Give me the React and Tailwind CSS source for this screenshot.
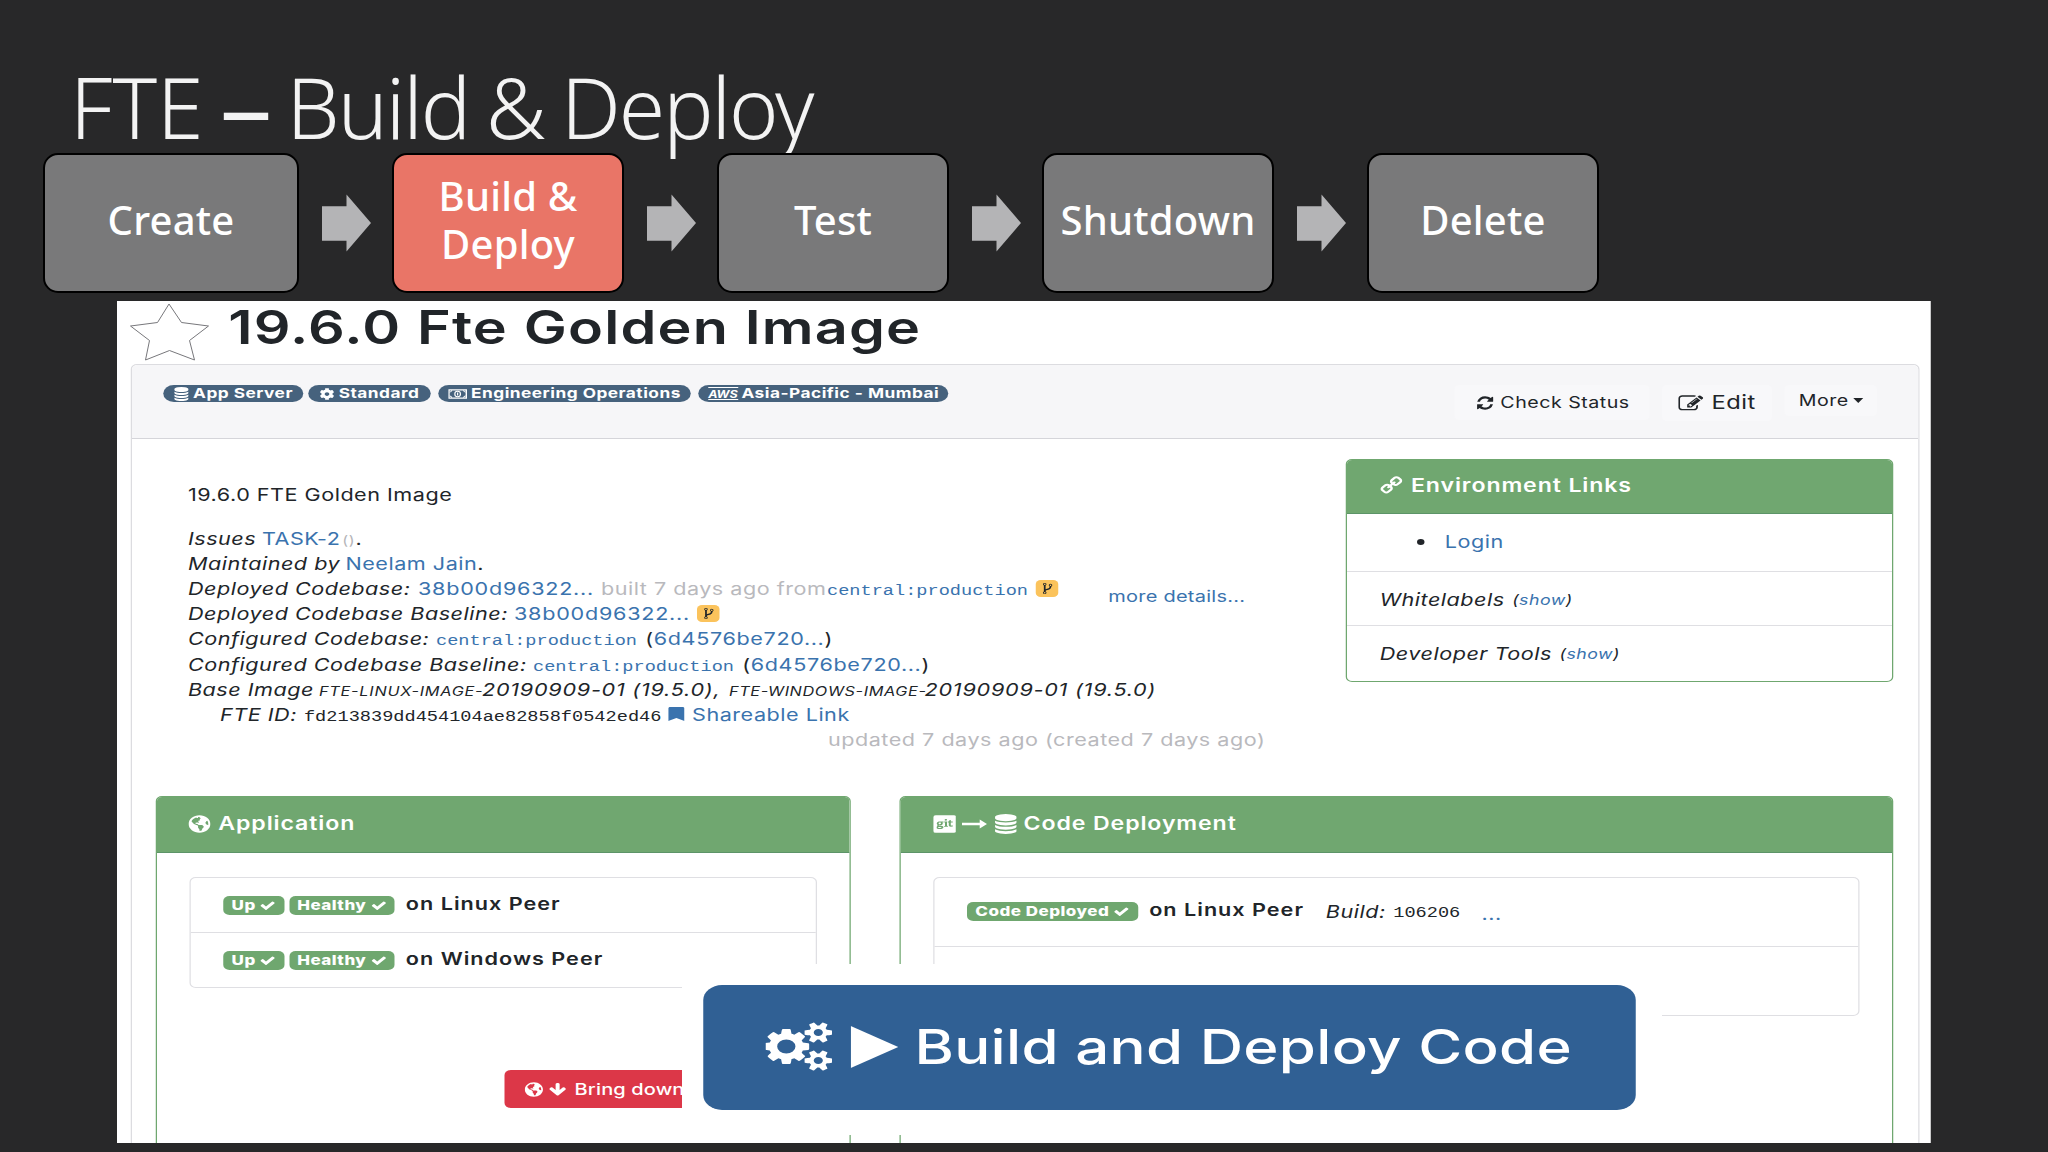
import React from 'react';
import clsx from 'clsx';
import { FaCog, FaGlobeAmericas, FaGitSquare, FaBookmark } from 'react-icons/fa';

const paths = {
  database: 'M896 768q237 0 443-43t325-127v170q0 69-103 128t-280 93.5-385 34.5-385-34.5-280-93.5-103-128v-170q119 84 325 127t443 43zm0 768q237 0 443-43t325-127v170q0 69-103 128t-280 93.5-385 34.5-385-34.5-280-93.5-103-128v-170q119 84 325 127t443 43zm0-384q237 0 443-43t325-127v170q0 69-103 128t-280 93.5-385 34.5-385-34.5-280-93.5-103-128v-170q119 84 325 127t443 43zm0-1152q208 0 385 34.5t280 93.5 103 128v128q0 69-103 128t-280 93.5-385 34.5-385-34.5-280-93.5-103-128v-128q0-69 103-128t280-93.5 385-34.5z',
  refresh: 'M1639 1056q0 5-1 7-64 268-268 434.5t-478 166.5q-146 0-282.5-55t-243.5-157l-129 129q-19 19-45 19t-45-19-19-45v-448q0-26 19-45t45-19h448q26 0 45 19t19 45-19 45l-137 137q71 66 161 102t187 36q134 0 250-65t186-179q11-17 53-117 8-23 30-23h192q13 0 22.5 9.5t9.5 22.5zm25-800v448q0 26-19 45t-45 19h-448q-26 0-45-19t-19-45 19-45l138-138q-148-137-349-137-134 0-250 65t-186 179q-11 17-53 117-8 23-30 23h-199q-13 0-22.5-9.5t-9.5-22.5v-7q65-268 270-434.5t480-166.5q146 0 284 55.5t245 156.5l130-129q19-19 45-19t45 19 19 45z',
  chain: 'M1520 1216q0-40-28-68l-208-208q-28-28-68-28-42 0-72 32 3 3 19 18.5t21.5 21.5 15 19 13 25.5 3.5 27.5q0 40-28 68t-68 28q-15 0-27.5-3.5t-25.5-13-19-15-21.5-21.5-18.5-19q-33 31-33 73 0 40 28 68l206 207q27 27 68 27 40 0 68-26l147-146q28-28 28-67zm-703-705q0-40-28-68l-206-207q-28-28-68-28-39 0-68 27l-147 146q-28 28-28 67 0 40 28 68l208 208q27 27 68 27 42 0 72-31-3-3-19-18.5t-21.5-21.5-15-19-13-25.5-3.5-27.5q0-40 28-68t68-28q15 0 27.5 3.5t25.5 13 19 15 21.5 21.5 18.5 19q33-31 33-73zm895 705q0 120-85 203l-147 146q-83 83-203 83-121 0-204-85l-206-207q-83-83-83-203 0-123 88-209l-88-88q-86 88-208 88-120 0-204-84l-208-208q-84-84-84-204t85-203l147-146q83-83 203-83 121 0 204 85l206 207q83 83 83 203 0 123-88 209l88 88q86-88 208-88 120 0 204 84l208 208q84 84 84 204z',
  edit: 'M888 1184l116-116-152-152-116 116v56h96v96h56zm440-720q-16-16-33 1l-350 350q-17 17-1 33t33-1l350-350q17-17 1-33zm80 594v190q0 119-84.5 203.5t-203.5 84.5h-832q-119 0-203.5-84.5t-84.5-203.5v-832q0-119 84.5-203.5t203.5-84.5h832q63 0 117 25 15 7 18 23 3 17-9 29l-49 49q-14 14-32 8-23-6-45-6h-832q-66 0-113 47t-47 113v832q0 66 47 113t113 47h832q66 0 113-47t47-113v-126q0-13 9-22l64-64q15-15 35-7t20 29zm-96-738l288 288-672 672h-288v-288zm444 132l-92 92-288-288 92-92q28-28 68-28t68 28l152 152q28 28 28 68t-28 68z',
  fork: 'M672 1472q0-40-28-68t-68-28-68 28-28 68 28 68 68 28 68-28 28-68zm0-1152q0-40-28-68t-68-28-68 28-28 68 28 68 68 28 68-28 28-68zm640 128q0-40-28-68t-68-28-68 28-28 68 28 68 68 28 68-28 28-68zm96 0q0 52-26 96.5t-70 69.5q-2 287-226 414-67 38-203 81-128 40-169.5 71t-41.5 100v26q44 25 70 69.5t26 96.5q0 80-56 136t-136 56-136-56-56-136q0-52 26-96.5t70-69.5v-820q-44-25-70-69.5t-26-96.5q0-80 56-136t136-56 136 56 56 136q0 52-26 96.5t-70 69.5v497q54-26 154-57 55-17 87.5-29.5t70.5-31 59-39.5 40.5-51 28-69.5 8.5-91.5q-44-25-70-69.5t-26-96.5q0-80 56-136t136-56 136 56 56 136z',
  check: 'M1671 566q0 40-28 68l-724 724-136 136q-28 28-68 28t-68-28l-136-136-362-362q-28-28-28-68t28-68l136-136q28-28 68-28t68 28l294 295 656-657q28-28 68-28t68 28l136 136q28 28 28 68z',
  down: 'M1675 832q0 53-37 90l-651 652q-39 37-91 37-53 0-90-37l-651-652q-38-36-38-90 0-53 38-91l74-75q39-37 91-37 53 0 90 37l294 294v-704q0-52 38-90t90-38h128q52 0 90 38t38 90v704l294-294q37-37 90-37 52 0 91 37l75 75q37 39 37 91z',
  cogs: 'M832 896q0-106-75-181t-181-75-181 75-75 181 75 181 181 75 181-75 75-181zm768 512q0-52-38-90t-90-38-90 38-38 90q0 53 37.5 90.5t90.5 37.5 90.5-37.5 37.5-90.5zm0-1024q0-52-38-90t-90-38-90 38-38 90q0 53 37.5 90.5t90.5 37.5 90.5-37.5 37.5-90.5zm-384 421v185q0 10-7 19.5t-16 10.5l-155 24q-11 35-32 76 34 48 90 115 7 11 7 20 0 12-7 19-23 30-82.5 89.5t-78.5 59.5q-11 0-21-7l-115-90q-37 19-77 31-11 108-23 155-7 24-30 24h-186q-11 0-20-7.5t-10-17.5l-23-153q-34-10-75-31l-118 89q-7 7-20 7-11 0-21-8-144-133-144-160 0-9 7-19 10-14 41-53t47-61q-23-44-35-82l-152-24q-10-1-17-9.5t-7-19.5v-185q0-10 7-19.5t16-10.5l155-24q11-35 32-76-34-48-90-115-7-11-7-20 0-12 7-20 22-30 82-89t79-59q11 0 21 7l115 90q34-18 77-32 11-108 23-154 7-24 30-24h186q11 0 20 7.5t10 17.5l23 153q34 10 75 31l118-89q8-7 20-7 11 0 21 8 144 133 144 160 0 8-7 19-12 16-42 54t-45 60q23 48 34 82l152 23q10 2 17 10.5t7 19.5zm640 533v140q0 16-149 31-12 27-30 52 51 113 51 138 0 4-4 7-122 71-124 71-8 0-46-47t-52-68q-20 2-30 2t-30-2q-14 21-52 68t-46 47q-2 0-124-71-4-3-4-7 0-25 51-138-18-25-30-52-149-15-149-31v-140q0-16 149-31 13-29 30-52-51-113-51-138 0-4 4-7 4-2 35-20t59-34 30-16q8 0 46 46.5t52 67.5q20-2 30-2t30 2q51-71 92-112l6-2q4 0 124 70 4 3 4 7 0 25-51 138 17 23 30 52 149 15 149 31zm0-1024v140q0 16-149 31-12 27-30 52 51 113 51 138 0 4-4 7-122 71-124 71-8 0-46-47t-52-68q-20 2-30 2t-30-2q-14 21-52 68t-46 47q-2 0-124-71-4-3-4-7 0-25 51-138-18-25-30-52-149-15-149-31v-140q0-16 149-31 13-29 30-52-51-113-51-138 0-4 4-7 4-2 35-20t59-34 30-16q8 0 46 46.5t52 67.5q20-2 30-2t30 2q51-71 92-112l6-2q4 0 124 70 4 3 4 7 0 25-51 138 17 23 30 52 149 15 149 31z',
};

const Icon = ({ name, className, viewBox = '0 0 1792 1792' }) => (
  <svg viewBox={viewBox} preserveAspectRatio="none" fill="currentColor" className={clsx('shrink-0', className)}>
    <path d={paths[name]} />
  </svg>
);

const Step = ({ children, active, className = 'w-[232px]' }) => (
  <div
    className={clsx(
      'flex h-[140px] shrink-0 items-center justify-center rounded-[15px] border-2 border-black pb-1.5 text-center text-[40px] font-medium leading-[48px] tracking-[0.2px] text-white',
      active ? 'bg-[#e97567]' : 'bg-[#79797a]',
      className
    )}
  >
    {children}
  </div>
);

const Arrow = () => (
  <svg viewBox="0 0 50 58" className="ml-[23px] mr-[21px] h-[58px] w-[49px] shrink-0">
    <path d="M0 12h25V0l25 29-25 29V47H0z" fill="#b4b4b6" />
  </svg>
);

const Tag = ({ children, className }) => (
  <span className={clsx('flex h-[17px] items-center justify-center gap-[3px] whitespace-nowrap rounded-full bg-[#46627d] text-[13.8px] font-bold tracking-[0.4px] text-white', className)}>
    {children}
  </span>
);

const Pill = ({ children, className }) => (
  <span className={clsx('flex h-[19px] items-center justify-center gap-[3px] rounded-[5px] bg-[#6fa76f] text-[13.6px] font-extrabold tracking-[0.4px] text-white', className)}>
    {children}
    <Icon name="check" className="h-[13px] w-[13px]" />
  </span>
);

const Line = ({ children, className }) => (
  <div className={clsx('flex h-[25.1px] items-baseline whitespace-pre leading-[25.1px]', className)}>{children}</div>
);

const Mono = ({ children, className }) => (
  <span className={clsx('font-["Liberation_Mono",monospace] text-[14.9px] leading-none tracking-normal', className)}>{children}</span>
);

const ForkBadge = ({ className }) => (
  <span className={clsx('flex h-[17px] w-[18.5px] items-center justify-center self-center rounded-[4px] bg-[#fbc35c] text-[#212529]', className)}>
    <Icon name="fork" className="h-[13px] w-[13px]" />
  </span>
);

const PanelHeader = ({ children, className }) => (
  <div className={clsx('flex items-center border-b border-[#5c9468] bg-[#70a770] text-[18.5px] font-semibold tracking-[0.7px] text-white', className)}>
    {children}
  </div>
);

const Peer = ({ name }) => (
  <div className="flex h-[54.5px] items-center pl-[26px]">
    <Pill className="mt-px w-[48.5px]">Up</Pill>
    <Pill className="ml-[4.5px] mt-px w-[83.5px]">Healthy</Pill>
    <span className="-mt-0.5 ml-[9.5px] text-[17.3px] font-semibold tracking-[0.8px]">on {name} Peer</span>
  </div>
);

const Details = () => (
  <div className="w-[970.8px] shrink-0 pl-[44.4px] pt-[43.2px]">
    <Line>19.6.0 FTE Golden Image</Line>
    <Line className="mt-[18.8px]">
      <i className="w-[59.2px]">Issues</i>
      <a className="w-[64.3px] text-[#3a73ae]">TASK-2</a>
      <span className="w-[10.5px] text-[13px] text-[#b5b5b9]">()</span>.
    </Line>
    <Line>
      <i className="w-[126px]">Maintained by</i>
      <a className="text-[#3a73ae]">Neelam Jain</a>.
    </Line>
    <Line>
      <i className="w-[184px]">Deployed Codebase:</i>
      <a className="w-[146.4px] tracking-[0.6px] text-[#3a73ae]">38b00d96322...</a>
      <span className="w-[180.8px] text-[#b9b9bd]">built 7 days ago from</span>
      <Mono className="w-[167px] text-[#3a73ae]">central:production</Mono>
      <ForkBadge />
      <a className="ml-[39.5px] translate-y-[7px] text-[16px] tracking-[0.2px] text-[#3a73ae]">more details...</a>
    </Line>
    <Line>
      <i className="w-[260.8px]">Deployed Codebase Baseline:</i>
      <a className="w-[146.4px] tracking-[0.6px] text-[#3a73ae]">38b00d96322...</a>
      <ForkBadge />
    </Line>
    <Line>
      <i className="w-[198.4px]">Configured Codebase:</i>
      <Mono className="w-[167.5px] text-[#3a73ae]">central:production</Mono>
      (<a className="tracking-[0.5px] text-[#3a73ae]">6d4576be720...</a>)
    </Line>
    <Line>
      <i className="w-[276px]">Configured Codebase Baseline:</i>
      <Mono className="w-[167.5px] text-[#3a73ae]">central:production</Mono>
      (<a className="tracking-[0.5px] text-[#3a73ae]">6d4576be720...</a>)
    </Line>
    <Line className="italic">
      <span className="w-[104.8px]">Base Image</span>
      <span className="w-[130.4px] text-[13px] tracking-[0.6px]">FTE-LINUX-IMAGE-</span>
      <span className="w-[197.6px] tracking-[0.6px]">20190909-01 (19.5.0),</span>
      <span className="w-[156.5px] text-[13px] tracking-[0.5px]">FTE-WINDOWS-IMAGE-</span>
      <span className="tracking-[0.6px]">20190909-01 (19.5.0)</span>
    </Line>
    <Line className="pl-[25.6px]">
      <i className="w-[67.2px]">FTE ID:</i>
      <Mono className="w-[291px]">fd213839dd454104ae82858f0542ed46</Mono>
      <FaBookmark preserveAspectRatio="none" className="h-[14px] w-[13px] self-center text-[#3a73ae]" />
      <a className="ml-[6.5px] text-[#3a73ae]">Shareable Link</a>
    </Line>
    <Line className="pl-[512px] text-[#b9b9bd]">updated 7 days ago (created 7 days ago)</Line>
  </div>
);

const EnvironmentLinks = () => (
  <div className="mt-5 h-[223px] w-[438px] shrink-0 overflow-hidden rounded-[5px] border-[1.5px] border-[#6fa76f]">
    <PanelHeader className="h-[54px] pb-0.5 pl-[26px]">
      <Icon name="chain" className="mr-[6px] h-[19px] w-[19px] -scale-x-100" />
      Environment Links
    </PanelHeader>
    <div className="flex h-[58px] items-center border-b border-[#dfdfe3] pb-0.5 pl-[56px]">
      <span className="mr-[16px] h-[6px] w-[6px] rounded-full bg-[#212529]" />
      <a className="text-[#3a73ae]">Login</a>
    </div>
    <div className="flex h-[54px] items-center border-b border-[#dfdfe3] pl-[26px] pt-0.5 italic">
      Whitelabels <span className="ml-[6px] text-[14.2px]">(<a className="text-[#3a73ae]">show</a>)</span>
    </div>
    <div className="flex h-[54px] items-center pl-[26px] pt-0.5 italic">
      Developer Tools <span className="ml-[6px] text-[14.2px]">(<a className="text-[#3a73ae]">show</a>)</span>
    </div>
  </div>
);

const Toolbar = () => (
  <div className="flex h-[74px] shrink-0 items-start rounded-t-[5px] border-b border-[#d5d5da] bg-[#f6f6f8] pl-[24.2px] pt-[20px]">
    <Tag className="w-[112.4px]">
      <Icon name="database" className="h-[14px] w-[13px]" />App Server
    </Tag>
    <Tag className="ml-[4.4px] w-[97.6px]">
      <FaCog className="h-3 w-3" />Standard
    </Tag>
    <Tag className="ml-[6.4px] w-[201.6px]">
      <svg viewBox="0 0 16 10" className="h-[10px] w-[15px]" fill="none" stroke="currentColor">
        <path d="M.6.6h14.8v8.8H.6z" strokeWidth="1.2" />
        <ellipse cx="8" cy="5" rx="2.4" ry="3" />
        <path d="M8 3.5v3M1 3q1.500 0 2-2M15 3q-1.500 0-2-2M1 7q1.500 0 2 2M15 7q-1.500 0-2 2" />
      </svg>
      Engineering Operations
    </Tag>
    <Tag className="ml-[6.4px] w-[200px]">
      <span className="flex h-[13px] items-center border-y border-white text-[10px] italic leading-none tracking-normal">AWS</span>
      Asia-Pacific - Mumbai
    </Tag>
    <div className="ml-auto flex items-start pr-[33px] text-[15.7px] tracking-[0.4px]">
      <button className="flex h-[35px] w-[156px] items-center justify-center gap-[5px] rounded bg-[#f8f8fa]">
        <Icon name="refresh" className="h-[16px] w-[15px]" />Check Status
      </button>
      <button className="ml-[9.5px] flex h-[36px] w-[88px] items-center justify-center gap-[7px] rounded bg-[#f8f8fa] text-[19px]">
        <Icon name="edit" className="h-[19px] w-[20px]" />Edit
      </button>
      <button className="ml-[10.5px] flex h-[31px] w-[74px] items-center justify-center gap-[4px] rounded bg-[#f8f8fa]">
        More
        <span className="border-x-[4.5px] border-t-[5px] border-x-transparent border-t-[#212529]" />
      </button>
    </div>
  </div>
);

const Panels = () => (
  <div className="flex h-[347px] gap-[39.2px] overflow-hidden pl-[18.7px]">
    <div className="h-[380px] w-[556px] shrink-0 overflow-hidden rounded-[5px] border-[1.5px] border-[#6fa76f]">
      <PanelHeader className="h-[56px] pb-px pl-[25px]">
        <FaGlobeAmericas className="mr-[6px] h-[18px] w-[18px]" />
        Application
      </PanelHeader>
      <div className="ml-[26px] mt-6 w-[501.6px] divide-y divide-[#dfdfe3] rounded-[5px] border border-[#dfdfe3]">
        <Peer name="Linux" />
        <Peer name="Windows" />
      </div>
      <button className="ml-[278px] mt-[82px] flex h-[38px] w-[250px] items-center rounded-[5px] bg-[#dc3748] pl-4 text-[16px] font-medium tracking-[0.1px] text-white">
        <FaGlobeAmericas className="mr-[4px] h-[15px] w-[15px]" />
        <Icon name="down" className="mr-[6px] h-[15px] w-[15px]" />
        Bring down
      </button>
    </div>
    <div className="h-[380px] w-[795px] shrink-0 overflow-hidden rounded-[5px] border-[1.5px] border-[#6fa76f]">
      <PanelHeader className="h-[56px] pb-px pl-[25.5px]">
        <FaGitSquare preserveAspectRatio="none" className="h-[20px] w-[18.5px]" />
        <svg viewBox="0 0 24 10" className="mx-[5px] h-[10px] w-[20px]" preserveAspectRatio="none" fill="currentColor">
          <path d="M0 3.700h17V.5L24 5l-7 4.500V6.300H0z" />
        </svg>
        <Icon name="database" className="mr-[4px] h-[20px] w-[20px]" />
        Code Deployment
      </PanelHeader>
      <div className="ml-[26px] mt-6 w-[741px] divide-y divide-[#dfdfe3] rounded-[5px] border border-[#dfdfe3]">
        <div className="flex h-[69px] items-center pb-px pl-[25.5px]">
          <Pill className="w-[137px]">Code Deployed</Pill>
          <span className="-mt-1 ml-[9px] font-semibold tracking-[0.8px]">on Linux Peer</span>
          <i className="ml-[17.5px]">Build:</i>
          <Mono className="ml-[6px] mt-1">106206</Mono>
          <a className="ml-[17px] mt-1 text-[#3a73ae]">...</a>
        </div>
        <div className="h-[68px]" />
      </div>
    </div>
  </div>
);

const App = () => {
  return (
    <div className="h-[1152px] w-[2048px] overflow-hidden bg-[#282829] font-['Noto_Sans',sans-serif]">
      <h1 className="flex h-[153px] items-end whitespace-nowrap pb-[6px] pl-[70px] text-[84px] font-light leading-[80px] text-[#f3f3f3]">
        <span>FTE</span>
        <span className="ml-[21px] mr-[20px] scale-x-125 font-medium">–</span>
        <span className="tracking-[-2px] [word-spacing:-3px]">Build &amp; Deploy</span>
      </h1>
      <div className="relative flex items-center pl-[43px]">
        <Step className="w-[256px]">Create</Step>
        <Arrow />
        <Step active>Build &amp;<br />Deploy</Step>
        <Arrow />
        <Step>Test</Step>
        <Arrow />
        <Step>Shutdown</Step>
        <Arrow />
        <Step>Delete</Step>
      </div>

      {/* dashboard page, stretched horizontally to fill the slide */}
      <div className="relative ml-[117px] mt-2 h-[841.5px] w-[1451.2px] origin-left scale-x-125 overflow-hidden bg-white font-['Inter',sans-serif] text-[17.3px] tracking-[0.4px] text-[#212529]">
        <div className="flex h-[63px] items-start pl-[10px]">
          <svg viewBox="0 0 80 58" preserveAspectRatio="none" className="mt-[2px] h-[58px] w-[64px]" fill="none" stroke="#77777b">
            <path d="M39.500 1L52 19.500 79 23 60 37.500 65 57 40 47.500 16 57 20 37.500 1 23 28 19.500z" />
          </svg>
          <h2 className="ml-[15px] text-[46px] font-semibold leading-[52px] tracking-[0.95px]">19.6.0 Fte Golden Image</h2>
        </div>
        <div className="ml-[11.4px] h-[800px] w-[1431px] rounded-[5px] border border-[#dcdce0]">
          <Toolbar />
          <div className="flex h-[357px]">
            <Details />
            <EnvironmentLinks />
          </div>
          <Panels />
        </div>

        <div className="absolute left-[452px] top-[663px] h-[171px] w-[784px] bg-white pl-[17px] pt-[21px]">
          <button className="flex h-[125px] w-[746px] items-center rounded-[15px] bg-[#306094] pb-0.5 pl-[50px] text-[48px] font-medium tracking-[0.25px] text-white">
            <Icon name="cogs" viewBox="0 0 1856 1792" className="h-[49px] w-[53px]" />
            <svg viewBox="0 0 38 42" className="ml-[15px] h-[42px] w-[38px]" preserveAspectRatio="none" fill="currentColor">
              <path d="M0 0l38 21L0 42z" />
            </svg>
            <span className="ml-[13px]">Build and Deploy Code</span>
          </button>
        </div>
      </div>
    </div>
  );
};

export default App;
